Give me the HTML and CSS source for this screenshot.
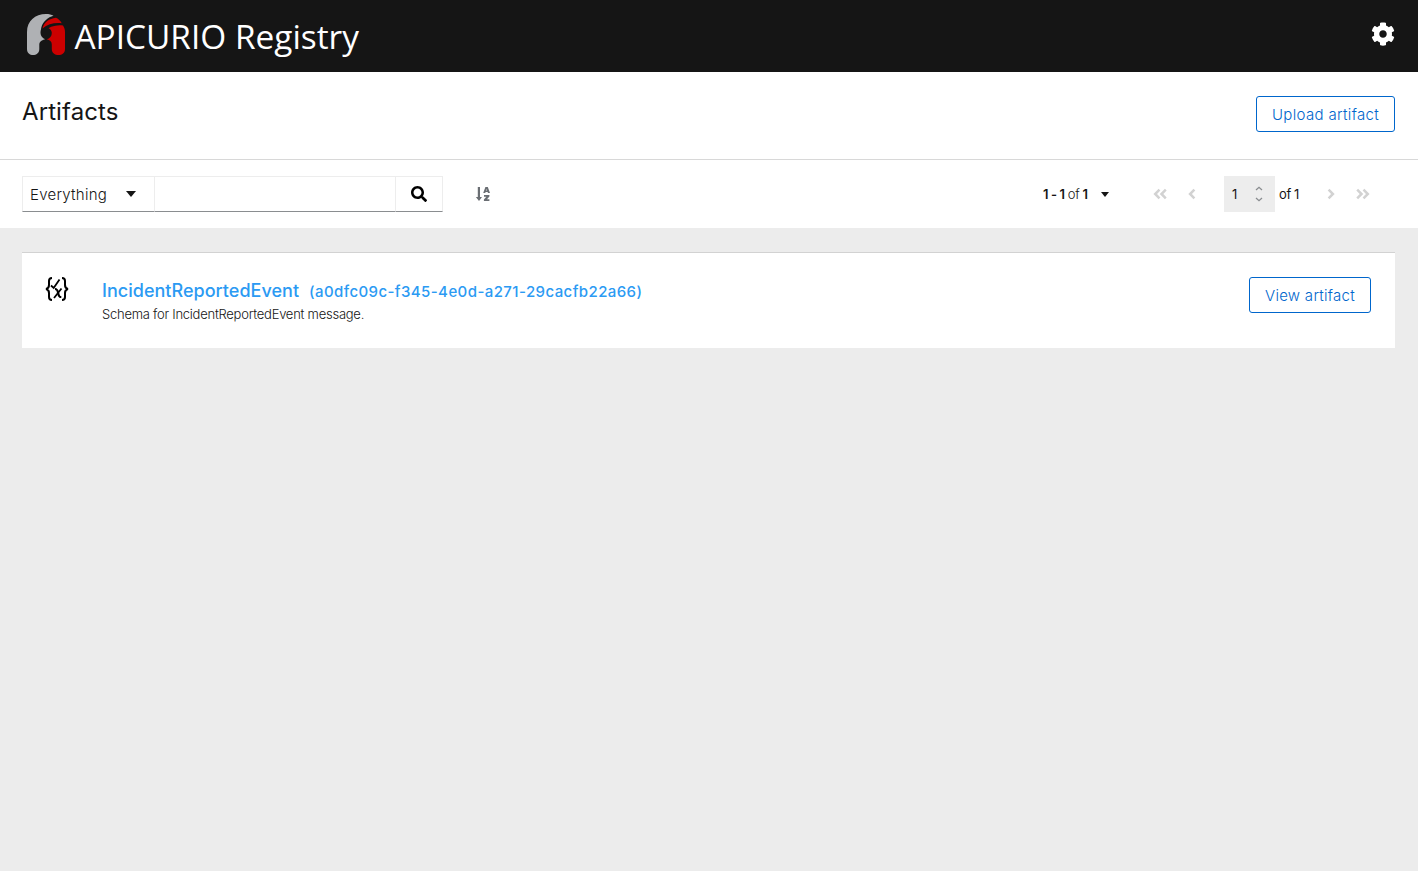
FILE: index.html
```html
<!DOCTYPE html>
<html lang="en">
<head>
<meta charset="utf-8">
<title>Apicurio Registry</title>
<link rel="stylesheet" href="styles.css">
</head>
<body>
<header class="masthead">
  <svg class="brand" width="340" height="48" viewBox="0 0 340 48">
    <path fill="#afb1b4" d="M1 37V20C1 9 9 2 20 2c3 0 5.500.6 7.500 1.700C22 5 17 9.500 15.300 15.500c-.2 2-.8 3-.8 5.500 0 3 2 5 4.700 6.300-3 .7-5.900 2.200-5.900 5.200V37c0 4-3 6-6.200 6S1 41 1 37z"/>
    <path fill="#c00" d="M16.500 16.500C18 10.500 23 6.500 30 5.800c2.700 1.300 4.700 3.200 5.700 5.500-7-.8-14 .7-19.200 5.200z"/>
    <path fill="#c00" d="M22.500 16.200C27 13.600 32 12.900 37 13.400c1.500 2.500 2 4.200 2 6.600v17c0 4-3 6-6.500 6s-6.700-2-6.700-6v-4.500c0-3-2-4.500-5-5.200 3-.8 5-3.300 5-6.300 0-2.200-1.300-4-3.300-4.800z"/>
    <text class="brand-text" x="48.500" y="37" textLength="284.500" lengthAdjust="spacingAndGlyphs">APICURIO Registry</text>
  </svg>
  <svg class="gear" width="24" height="24" viewBox="0 0 512 512"><path d="M487.400 315.700l-42.600-24.600c4.300-23.200 4.300-47 0-70.200l42.600-24.600c4.900-2.800 7.100-8.600 5.500-14-11.100-35.600-30-67.800-54.700-94.600-3.800-4.100-10-5.100-14.800-2.300L380.800 110c-17.900-15.400-38.500-27.300-60.800-35.100V25.800c0-5.600-3.900-10.500-9.400-11.700-36.700-8.200-74.300-7.800-109.200 0-5.500 1.200-9.400 6.100-9.400 11.700V75c-22.200 7.900-42.800 19.800-60.800 35.100L88.700 85.500c-4.900-2.800-11-1.900-14.800 2.300-24.700 26.700-43.600 58.900-54.700 94.600-1.700 5.400.6 11.200 5.500 14L67.300 221c-4.300 23.200-4.300 47 0 70.200l-42.600 24.600c-4.900 2.800-7.100 8.600-5.500 14 11.100 35.600 30 67.800 54.700 94.600 3.800 4.100 10 5.100 14.800 2.300l42.600-24.600c17.900 15.400 38.500 27.300 60.800 35.100v49.200c0 5.600 3.900 10.500 9.400 11.700 36.700 8.200 74.300 7.800 109.200 0 5.500-1.200 9.400-6.100 9.400-11.700v-49.200c22.200-7.900 42.800-19.800 60.800-35.100l42.600 24.600c4.900 2.800 11 1.900 14.800-2.300 24.700-26.700 43.600-58.900 54.700-94.600 1.500-5.500-.7-11.300-5.600-14.100zM256 336c-44.100 0-80-35.900-80-80s35.900-80 80-80 80 35.900 80 80-35.900 80-80 80z"/></svg>
</header>
<section class="page-title">
  <h1>Artifacts</h1>
  <button class="btn upload"><span>Upload artifact</span></button>
</section>
<section class="toolbar">
  <div class="filter">
    <button class="select"><span>Everything</span><i class="caret"></i></button>
    <input class="query" type="text" aria-label="Search">
    <button class="search" aria-label="Search"><svg width="16" height="16" viewBox="0 0 512 512"><path d="M505 442.700L405.300 343c-4.500-4.500-10.600-7-17-7H372c27.600-35.300 44-79.700 44-128C416 93.100 322.900 0 208 0S0 93.100 0 208s93.100 208 208 208c48.300 0 92.700-16.400 128-44v16.300c0 6.400 2.500 12.500 7 17l99.700 99.700c9.400 9.400 24.600 9.400 33.900 0l28.300-28.300c9.400-9.400 9.400-24.600.1-34zM208 336c-70.700 0-128-57.200-128-128 0-70.700 57.200-128 128-128 70.700 0 128 57.200 128 128 0 70.700-57.200 128-128 128z"/></svg></button>
  </div>
  <svg class="sort" width="16" height="16" viewBox="0 0 16 16"><path d="M2.800 1h2.200v10h2L4 15 .9 11h1.900z"/><path fill-rule="evenodd" d="M10.400 1h2.400L15 7h-2l-.4-1h-2l-.4 1h-2zM11.100 4.600h1L11.600 3zM9 9h5.400v1.500L12 13.200h2.400V15H8.900v-1.600l2.400-2.600H9z"/></svg>
  <div class="pagination">
    <div class="range"><b>1 - 1</b> of <b>1</b></div><i class="caret small"></i>
    <svg class="nav first" width="14" height="10" viewBox="0 0 14 10"><path d="M6.500 .7L2.200 5l4.300 4.300M12.800 .7L8.500 5l4.300 4.300"/></svg>
    <svg class="nav prev" width="8" height="10" viewBox="0 0 8 10"><path d="M6.400 .7L2.100 5l4.300 4.300"/></svg>
    <div class="page-input"><span>1</span><svg width="8" height="16" viewBox="0 0 8 16"><path d="M1 4l3-2.700L7 4M1 12l3 2.700L7 12"/></svg></div>
    <span class="total">of 1</span>
    <svg class="nav next" width="8" height="10" viewBox="0 0 8 10"><path d="M1.600 .7L5.900 5 1.600 9.300"/></svg>
    <svg class="nav last" width="14" height="10" viewBox="0 0 14 10"><path d="M1.200 .7L5.500 5 1.200 9.300M7.500 .7L11.800 5 7.500 9.300"/></svg>
  </div>
</section>
<main>
  <article class="card">
    <svg class="type-icon" width="24" height="26" viewBox="0 0 24 26"><g fill="none" stroke="#000"><path stroke-width="2" d="M7 2C4.500 2 4 3 4 5v4c0 2-.5 3.500-3 4 2.500.5 3 2 3 4v4c0 2 .5 3 3 3M17 2c2.500 0 3 1 3 3v4c0 2 .5 3.500 3 4-2.500.5-3 2-3 4v4c0 2-.5 3-3 3"/><path stroke-width="1.800" d="M6 9.500L8.700 12 14.500 3.500M16.500 12.500L9 22"/><path stroke-width="2.200" d="M10 13c2 0 2.500.8 3.200 4.200S14.500 21 16.300 21"/></g></svg>
    <div class="info">
      <a class="name"><span class="title">IncidentReportedEvent</span><span class="id">(a0dfc09c-f345-4e0d-a271-29cacfb22a66)</span></a>
      <p class="desc">Schema for IncidentReportedEvent message.</p>
    </div>
    <button class="btn view"><span>View artifact</span></button>
  </article>
</main>
</body>
</html>
```
FILE: styles.css
```css
* { box-sizing: border-box; }
body { margin: 0; height: 871px; display: flex; flex-direction: column; font-family: Inter, "Liberation Sans", sans-serif; font-size: 16px; color: #151515; background: #fff; }
svg { display: block; flex: none; }
button { font: inherit; color: inherit; background: #fff; padding: 0; }
.masthead { height: 72px; flex: none; background: #151515; padding: 12px 23px 0 26px; display: flex; justify-content: space-between; }
.brand-text { font: 33.5px "Open Sans", "Noto Sans", sans-serif; fill: #fff; }
.gear { fill: #fff; margin-top: 10px; }
.page-title { height: 88px; flex: none; padding: 24px 23px 0 22px; display: flex; justify-content: space-between; border-bottom: 1px solid #d8d8d8; }
h1 { margin: 0; font-size: 24px; line-height: 31px; font-weight: 400; letter-spacing: .1px; }
.btn { height: 36px; border: 1px solid #06c; border-radius: 3px; color: #06c; font-size: 15px; font-weight: 350; letter-spacing: .35px; white-space: nowrap; flex: none; }
.upload { width: 139px; }
.view { width: 122px; letter-spacing: .28px; }
.toolbar { height: 68px; flex: none; padding: 16px 48px 0 22px; display: flex; }
.filter { display: flex; width: 421px; height: 36px; }
.select, .query, .search { border: 1px solid #ededed; border-bottom-color: #8a8d90; border-radius: 0; height: 36px; }
.select { width: 133px; display: flex; align-items: center; justify-content: space-between; padding: 0 18px 0 7px; font-size: 15px; font-weight: 350; letter-spacing: .25px; }
.query { width: 240px; border-left: 0; border-right: 0; outline: 0; }
.search { width: 48px; display: flex; align-items: center; justify-content: center; padding-right: 1px; }
.caret { border: 5px solid transparent; border-top: 6px solid #151515; border-bottom: 0; }
.caret.small { border-width: 5px 4.5px 0; margin: 16px 0 0 10px; height: 5px; }
.sort { fill: #6a6e73; margin: 10px 0 0 32px; }
.pagination { margin-left: auto; display: flex; height: 36px; font-size: 13px; line-height: 36px; }
.range { width: 48px; white-space: nowrap; letter-spacing: -.4px; font-weight: 350; }
.range b { font-weight: 600; }
.nav { fill: none; stroke: #d2d2d2; stroke-width: 2.5; margin-top: 13px; overflow: visible; }
.first { margin-left: 44px; }
.prev { margin-left: 21px; }
.page-input { width: 51px; margin-left: 28px; background: #ededed; display: flex; justify-content: space-between; padding: 0 12px 0 8px; }
.page-input svg { fill: none; stroke: #8a8d90; stroke-width: 1.3; margin-top: 10px; }
.total { width: 21px; margin-left: 4px; white-space: nowrap; letter-spacing: -.4px; }
.next { margin-left: 27px; }
.last { margin-left: 21px; }
main { flex: 1; background: #ececec; padding: 24px 23px 0 22px; }
.card { height: 96px; background: #fff; border-top: 1px solid #d2d2d2; padding: 24px 24px 0 23px; display: flex; }
.type-icon { margin-top: -1px; }
.info { flex: 1; margin-left: 33px; white-space: nowrap; }
.name { display: flex; height: 28px; line-height: 28px; color: #2b9af3; font-weight: 550; }
.title { font-size: 18px; width: 207px; letter-spacing: .02px; }
.id { font-size: 15px; line-height: 29px; letter-spacing: .42px; }
.desc { margin: 0; font-size: 13px; line-height: 19px; font-weight: 350; letter-spacing: -.25px; }
```
